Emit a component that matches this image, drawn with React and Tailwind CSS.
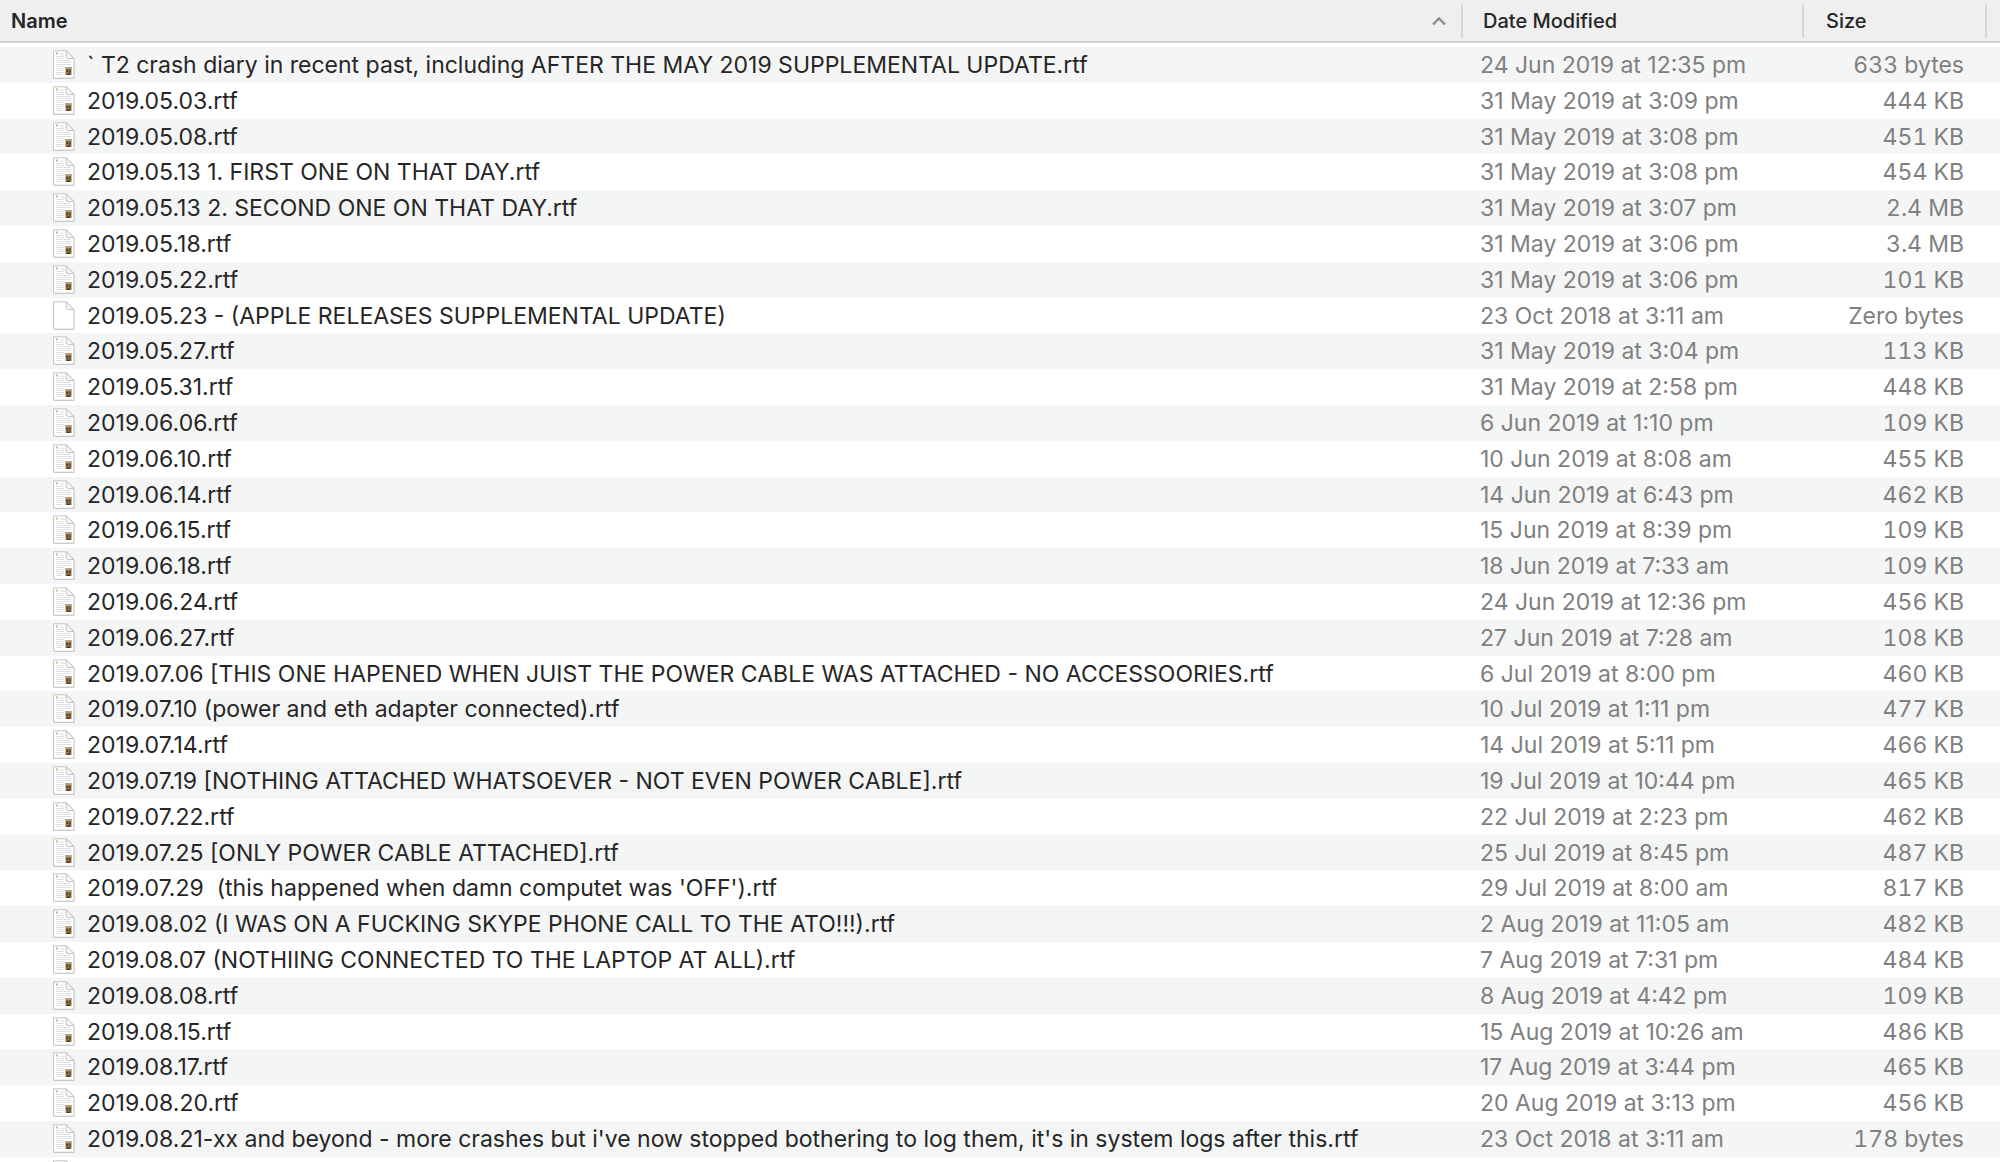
import React from "react"

const files = [
  ["` T2 crash diary in recent past, including AFTER THE MAY 2019 SUPPLEMENTAL UPDATE.rtf", "24 Jun 2019 at 12:35 pm", "633 bytes"],
  ["2019.05.03.rtf", "31 May 2019 at 3:09 pm", "444 KB"],
  ["2019.05.08.rtf", "31 May 2019 at 3:08 pm", "451 KB"],
  ["2019.05.13 1. FIRST ONE ON THAT DAY.rtf", "31 May 2019 at 3:08 pm", "454 KB"],
  ["2019.05.13 2. SECOND ONE ON THAT DAY.rtf", "31 May 2019 at 3:07 pm", "2.4 MB"],
  ["2019.05.18.rtf", "31 May 2019 at 3:06 pm", "3.4 MB"],
  ["2019.05.22.rtf", "31 May 2019 at 3:06 pm", "101 KB"],
  ["2019.05.23 - (APPLE RELEASES SUPPLEMENTAL UPDATE)", "23 Oct 2018 at 3:11 am", "Zero bytes"],
  ["2019.05.27.rtf", "31 May 2019 at 3:04 pm", "113 KB"],
  ["2019.05.31.rtf", "31 May 2019 at 2:58 pm", "448 KB"],
  ["2019.06.06.rtf", "6 Jun 2019 at 1:10 pm", "109 KB"],
  ["2019.06.10.rtf", "10 Jun 2019 at 8:08 am", "455 KB"],
  ["2019.06.14.rtf", "14 Jun 2019 at 6:43 pm", "462 KB"],
  ["2019.06.15.rtf", "15 Jun 2019 at 8:39 pm", "109 KB"],
  ["2019.06.18.rtf", "18 Jun 2019 at 7:33 am", "109 KB"],
  ["2019.06.24.rtf", "24 Jun 2019 at 12:36 pm", "456 KB"],
  ["2019.06.27.rtf", "27 Jun 2019 at 7:28 am", "108 KB"],
  ["2019.07.06 [THIS ONE HAPENED WHEN JUIST THE POWER CABLE WAS ATTACHED - NO ACCESSOORIES.rtf", "6 Jul 2019 at 8:00 pm", "460 KB"],
  ["2019.07.10 (power and eth adapter connected).rtf", "10 Jul 2019 at 1:11 pm", "477 KB"],
  ["2019.07.14.rtf", "14 Jul 2019 at 5:11 pm", "466 KB"],
  ["2019.07.19 [NOTHING ATTACHED WHATSOEVER - NOT EVEN POWER CABLE].rtf", "19 Jul 2019 at 10:44 pm", "465 KB"],
  ["2019.07.22.rtf", "22 Jul 2019 at 2:23 pm", "462 KB"],
  ["2019.07.25 [ONLY POWER CABLE ATTACHED].rtf", "25 Jul 2019 at 8:45 pm", "487 KB"],
  ["2019.07.29  (this happened when damn computet was 'OFF').rtf", "29 Jul 2019 at 8:00 am", "817 KB"],
  ["2019.08.02 (I WAS ON A FUCKING SKYPE PHONE CALL TO THE ATO!!!).rtf", "2 Aug 2019 at 11:05 am", "482 KB"],
  ["2019.08.07 (NOTHIING CONNECTED TO THE LAPTOP AT ALL).rtf", "7 Aug 2019 at 7:31 pm", "484 KB"],
  ["2019.08.08.rtf", "8 Aug 2019 at 4:42 pm", "109 KB"],
  ["2019.08.15.rtf", "15 Aug 2019 at 10:26 am", "486 KB"],
  ["2019.08.17.rtf", "17 Aug 2019 at 3:44 pm", "465 KB"],
  ["2019.08.20.rtf", "20 Aug 2019 at 3:13 pm", "456 KB"],
  ["2019.08.21-xx and beyond - more crashes but i've now stopped bothering to log them, it's in system logs after this.rtf", "23 Oct 2018 at 3:11 am", "178 bytes"],
]

function FileIcon({ blank }) {
  return (
    <svg className="w-6 h-[30px] shrink-0" viewBox="0 0 24 30" fill="none" aria-hidden="true">
      <path d="M2 1.2h12.5L22.3 9v20H2z" fill="#000" opacity=".18" />
      <path d="M1.5 .8h12.7l7.8 7.8v19.6H1.5z" fill="#fff" stroke="#c4c4c4" />
      {!blank && (
        <g>
          <path d="M4 2.6h2v2H4z" fill="#e3b075" />
          <path
            d="M7.5 4.2h5M4 6.5h8M4 8.5h8M4 10.5h14.5M4 12.5h15.5M4 14.5h15M4 16.5h8M4 18.5h8M4 20.5h8M4 22.5h8M4 24.5h6"
            stroke="#dedede"
            strokeWidth="1"
          />
          <path d="M13.5 17h6v8h-6z" fill="#8f7048" />
          <path d="M13.5 17h6v2h-6z" fill="#b5a078" />
          <path d="M14.5 20h1.5v2h-1.5zM17.5 19.5h1v3h-1zM15 23.5h3V25h-3z" fill="#4f3a24" />
        </g>
      )}
      <path d="M14.2 .8v5.6q0 2.2 2.2 2.2H22z" fill="#f6f6f6" stroke="#c0c0c0" />
    </svg>
  )
}

function SortArrow() {
  return (
    <svg className="w-4 h-4" viewBox="0 0 16 16" fill="none" aria-hidden="true">
      <path d="M2 11.5L8 5.5l6 6" stroke="#8e8e8e" strokeWidth="2.4" />
    </svg>
  )
}

export default function App() {
  return (
    <div className="h-screen overflow-hidden bg-white font-['Inter',sans-serif] text-[#262626]">
      <table className="w-full table-fixed border-collapse text-[23px] leading-7">
        <colgroup>
          <col />
          <col className="w-[341px]" />
          <col className="w-[196px]" />
        </colgroup>
        <thead className="bg-[#efefef] text-left text-xl">
          <tr className="h-[42px]">
            <th className="p-0 font-semibold" aria-sort="ascending">
              <div className="flex h-[34px] items-center justify-between border-r-2 border-[#d8d8d8] pl-[11px] pr-[14px]">
                Name
                <SortArrow />
              </div>
            </th>
            <th className="p-0 font-medium">
              <div className="flex h-[34px] items-center border-r-2 border-[#d8d8d8] pl-5">Date Modified</div>
            </th>
            <th className="p-0 font-medium">
              <div className="mr-[13px] flex h-[34px] items-center border-r-2 border-[#d8d8d8] pl-[22px]">Size</div>
            </th>
          </tr>
        </thead>
        <tbody>
          <tr className="h-[5px] bg-white" aria-hidden="true">
            <td colSpan={3} className="border-t-2 border-[#cfcfcf] p-0"></td>
          </tr>
          {files.map(([name, date, size]) => (
            <tr key={name} className="h-[36px] nth-[5n+4]:h-[35px] even:bg-[#f4f5f5]">
              <td className="py-0 pr-0 pl-[52px]">
                <div className="flex items-center gap-[11px]">
                  <FileIcon blank={size === "Zero bytes"} />
                  <span className="whitespace-pre">{name}</span>
                </div>
              </td>
              <td className="py-0 pr-0 pl-[17px] text-[#808080]">{date}</td>
              <td className="py-0 pl-0 pr-9 text-right tabular-nums text-[#808080]">{size}</td>
            </tr>
          ))}
          {/* next row, cut off by the window edge */}
          <tr className="h-[36px]" aria-hidden="true">
            <td colSpan={3} className="py-0 pr-0 pl-[52px]">
              <FileIcon />
            </td>
          </tr>
        </tbody>
      </table>
    </div>
  )
}
